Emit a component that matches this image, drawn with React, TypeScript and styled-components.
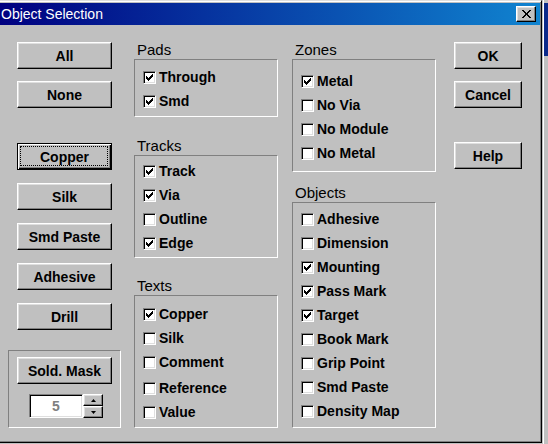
import React from 'react';
import styled, { createGlobalStyle, css } from 'styled-components';

const GlobalStyle = createGlobalStyle`
  html, body {
    margin: 0;
    padding: 0;
    background: #c0c0c0;
  }
  body {
    font-family: "Liberation Sans", Arial, sans-serif;
  }
`;

const raised = css`
  border: 1px solid;
  border-color: #fff #000 #000 #fff;
  box-shadow: inset -1px -1px 0 #808080, inset 1px 1px 0 #dfdfdf;
`;

const sunken = css`
  border: 1px solid;
  border-color: #808080 #fff #fff #808080;
  box-shadow: inset 1px 1px 0 #000, inset -1px -1px 0 #dfdfdf;
`;

const Screen = styled.div`
  display: flex;
  width: 548px;
  height: 444px;
  overflow: hidden;
  background: #c0c0c0;
`;

const Window = styled.div`
  box-sizing: border-box;
  width: 542px;
  height: 443px;
  flex-shrink: 0;
  display: flex;
  flex-direction: column;
  padding: 2px 1px 1px 0;
  border-top: 1px solid #dfdfdf;
  border-right: 1px solid #000;
  border-bottom: 1px solid #000;
  background: #c0c0c0;
  box-shadow: inset 0 1px 0 #fff, inset -1px -1px 0 #808080;
`;

const Behind = styled.div`
  flex: 1;
  border-left: 1px solid #c0c0c0;
  background: linear-gradient(to bottom, #c0c0c0 0 3px, #0c2a8a 3px 56px, #c0c0c0 56px);
  box-shadow: inset 1px 0 0 #fff;
`;

const TitleBar = styled.div`
  height: 22px;
  flex-shrink: 0;
  display: flex;
  align-items: center;
  justify-content: space-between;
  padding: 0 4px 0 1px;
  background: linear-gradient(to right, #000080, #1084d0);
  color: #fff;
  font: 14px "Liberation Sans", Arial, sans-serif;
`;

const CloseButton = styled.div`
  box-sizing: border-box;
  width: 20px;
  height: 16px;
  display: flex;
  align-items: center;
  justify-content: center;
  background: #c0c0c0;
  ${raised}
`;

const Body = styled.div`
  flex: 1;
  display: flex;
  align-items: flex-start;
  padding: 16px 0 0 8px;
`;

const ButtonColumn = styled.div<{ $width: number; $left?: number }>`
  width: ${(p) => p.$width}px;
  margin-left: ${(p) => p.$left ?? 0}px;
  display: flex;
  flex-direction: column;
  align-items: center;
`;

const GroupColumn = styled.div<{ $left: number }>`
  width: 144px;
  margin-left: ${(p) => p.$left}px;
  display: flex;
  flex-direction: column;
`;

const Button = styled.button<{ $default?: boolean; $top?: number; $width?: number }>`
  box-sizing: border-box;
  position: relative;
  width: ${(p) => p.$width ?? 95}px;
  height: 27px;
  margin: ${(p) => p.$top ?? 0}px 0 0;
  padding: 0;
  background: #c0c0c0;
  color: #000;
  font: bold 14px "Liberation Sans", Arial, sans-serif;
  ${raised}
  ${(p) =>
    p.$default &&
    css`
      border-color: #000;
      box-shadow: inset 1px 1px 0 #fff, inset -1px -1px 0 #000, inset -2px -2px 0 #808080;
      &::after {
        content: '';
        position: absolute;
        inset: 2px 3px 3px 2px;
        border: 1px dotted #000;
      }
    `}
`;

const GroupLabel = styled.div<{ $top?: number }>`
  margin: ${(p) => p.$top ?? 0}px 0 1px;
  padding-left: 3px;
  font: 15px/17px "Liberation Sans", Arial, sans-serif;
  color: #000;
`;

const GroupBox = styled.div<{ $pt: number; $pb: number }>`
  display: flex;
  flex-direction: column;
  padding: ${(p) => p.$pt}px 0 ${(p) => p.$pb}px 8px;
  border: 1px solid;
  border-color: #808080 #fff #fff #808080;
`;

const MaskGroup = styled.div`
  box-sizing: border-box;
  width: 113px;
  margin-top: 20px;
  display: flex;
  flex-direction: column;
  align-items: center;
  padding: 6px 0 9px;
  border: 1px solid;
  border-color: #808080 #fff #fff #808080;
`;

const Option = styled.div<{ $extra?: number }>`
  display: flex;
  align-items: center;
  height: 24px;
  margin-top: ${(p) => p.$extra ?? 0}px;
  font: bold 14px/24px "Liberation Sans", Arial, sans-serif;
  color: #000;
`;

const CheckBox = styled.span`
  box-sizing: border-box;
  width: 13px;
  height: 13px;
  flex-shrink: 0;
  margin-right: 3px;
  display: flex;
  align-items: center;
  justify-content: center;
  background: #fff;
  ${sunken}
`;

const Spin = styled.div`
  align-self: flex-start;
  margin: 10px 0 0 20px;
  display: flex;
`;

const SpinEdit = styled.div`
  box-sizing: border-box;
  width: 54px;
  height: 24px;
  display: flex;
  align-items: center;
  justify-content: center;
  background: #fff;
  color: #808080;
  font: bold 14px "Liberation Sans", Arial, sans-serif;
  ${sunken}
`;

const SpinButtons = styled.div`
  width: 20px;
  display: flex;
  flex-direction: column;
`;

const SpinButton = styled.div`
  box-sizing: border-box;
  height: 12px;
  display: flex;
  align-items: center;
  justify-content: center;
  background: #c0c0c0;
  ${raised}
`;

const checkPixels = [
  [6, 0], [5, 1], [6, 1], [0, 2], [4, 2], [5, 2], [6, 2],
  [0, 3], [1, 3], [3, 3], [4, 3], [5, 3],
  [0, 4], [1, 4], [2, 4], [3, 4], [4, 4],
  [1, 5], [2, 5], [3, 5], [2, 6],
];

function CheckMark() {
  return (
    <svg width="7" height="7" viewBox="0 0 7 7" shapeRendering="crispEdges">
      {checkPixels.map(([x, y]) => (
        <rect key={`${x}-${y}`} x={x} y={y} width="1" height="1" fill="#000" />
      ))}
    </svg>
  );
}

function CloseGlyph() {
  const rows = Array.from({ length: 8 }, (_, i) => i);
  return (
    <svg width="9" height="8" viewBox="0 0 9 8" shapeRendering="crispEdges">
      {rows.map((i) => (
        <g key={i} fill="#000">
          <rect x={i} y={i} width="2" height="1" />
          <rect x={7 - i} y={i} width="2" height="1" />
        </g>
      ))}
    </svg>
  );
}

function Check({ label, on, extra }: { label: string; on?: boolean; extra?: number }) {
  return (
    <Option $extra={extra}>
      <CheckBox>{on && <CheckMark />}</CheckBox>
      {label}
    </Option>
  );
}

export default function App() {
  return (
    <>
      <GlobalStyle />
      <Screen>
        <Window>
          <TitleBar>
            <span>Object Selection</span>
            <CloseButton>
              <CloseGlyph />
            </CloseButton>
          </TitleBar>
          <Body>
            <ButtonColumn $width={113}>
              <Button $top={1}>All</Button>
              <Button $top={12}>None</Button>
              <Button $top={35} $default>
                Copper
              </Button>
              <Button $top={13}>Silk</Button>
              <Button $top={13}>Smd Paste</Button>
              <Button $top={13}>Adhesive</Button>
              <Button $top={13}>Drill</Button>
              <MaskGroup>
                <Button>Sold. Mask</Button>
                <Spin>
                  <SpinEdit>5</SpinEdit>
                  <SpinButtons>
                    <SpinButton>
                      <svg width="5" height="3" viewBox="0 0 5 3">
                        <polygon points="2.5,0 5,3 0,3" fill="#000" />
                      </svg>
                    </SpinButton>
                    <SpinButton>
                      <svg width="5" height="3" viewBox="0 0 5 3">
                        <polygon points="0,0 5,0 2.5,3" fill="#000" />
                      </svg>
                    </SpinButton>
                  </SpinButtons>
                </Spin>
              </MaskGroup>
            </ButtonColumn>

            <GroupColumn $left={13}>
              <GroupLabel>Pads</GroupLabel>
              <GroupBox $pt={5} $pb={3}>
                <Check label="Through" on />
                <Check label="Smd" on />
              </GroupBox>
              <GroupLabel $top={20}>Tracks</GroupLabel>
              <GroupBox $pt={3} $pb={2}>
                <Check label="Track" on />
                <Check label="Via" on />
                <Check label="Outline" />
                <Check label="Edge" on />
              </GroupBox>
              <GroupLabel $top={19}>Texts</GroupLabel>
              <GroupBox $pt={6} $pb={3}>
                <Check label="Copper" on />
                <Check label="Silk" />
                <Check label="Comment" />
                <Check label="Reference" extra={2} />
                <Check label="Value" />
              </GroupBox>
            </GroupColumn>

            <GroupColumn $left={14}>
              <GroupLabel>Zones</GroupLabel>
              <GroupBox $pt={9} $pb={6}>
                <Check label="Metal" on />
                <Check label="No Via" />
                <Check label="No Module" />
                <Check label="No Metal" />
              </GroupBox>
              <GroupLabel $top={12}>Objects</GroupLabel>
              <GroupBox $pt={4} $pb={4}>
                <Check label="Adhesive" />
                <Check label="Dimension" />
                <Check label="Mounting" on />
                <Check label="Pass Mark" on />
                <Check label="Target" on />
                <Check label="Book Mark" />
                <Check label="Grip Point" />
                <Check label="Smd Paste" />
                <Check label="Density Map" />
              </GroupBox>
            </GroupColumn>

            <ButtonColumn $width={68} $left={18}>
              <Button $top={1} $width={68}>
                OK
              </Button>
              <Button $top={12} $width={68}>
                Cancel
              </Button>
              <Button $top={34} $width={68}>
                Help
              </Button>
            </ButtonColumn>
          </Body>
        </Window>
        <Behind />
      </Screen>
    </>
  );
}
